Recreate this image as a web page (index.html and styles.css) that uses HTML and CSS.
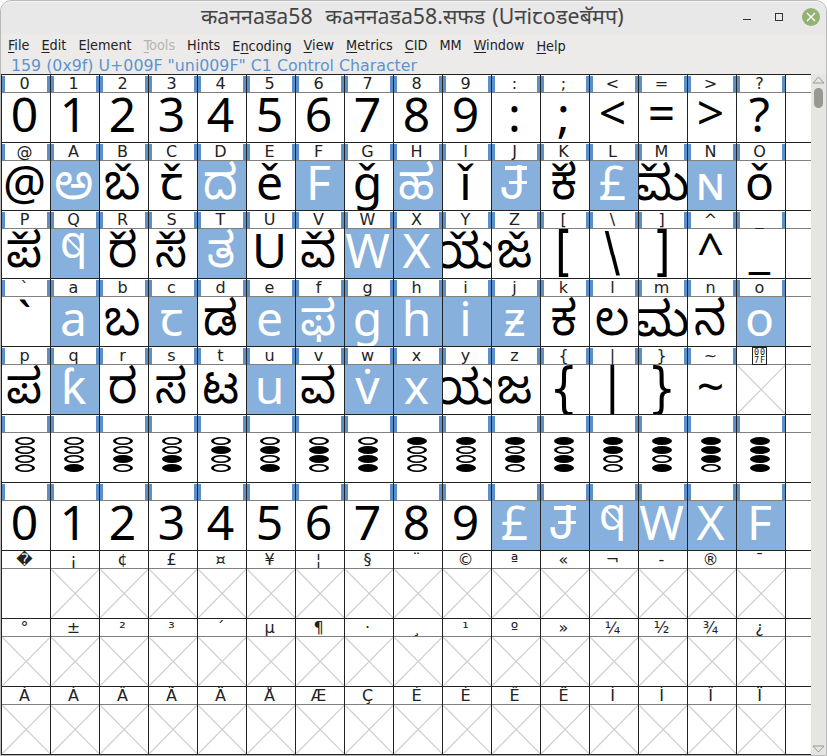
FILE: index.html
```
<!DOCTYPE html>
<html lang="en">
<head>
<meta charset="utf-8">
<title>Font view</title>
<link rel="stylesheet" href="styles.css">
</head>
<body>
<div class="window">
  <header class="titlebar">
    <h1 class="title"><span>कaननaडa58</span><span>कaननaडa58.सफड</span><span>(Uनiꞇoडeबॅमप)</span></h1>
    <svg class="controls" width="84" height="22" viewBox="0 0 84 22">
      <path d="M3 13.500h8" stroke="#333" fill="none"/>
      <rect x="35.500" y="7.500" width="7" height="7" stroke="#333" fill="none"/>
      <circle cx="71" cy="11" r="9" fill="#92b372"/>
      <path d="M67 7l8 8M75 7l-8 8" stroke="#fff" stroke-width="1.300" fill="none"/>
    </svg>
  </header>
  <nav class="menu">
    <span><u>F</u>ile</span><span><u>E</u>dit</span><span>E<u>l</u>ement</span><span class="off"><u>T</u>ools</span><span>H<u>i</u>nts</span><span class="low">E<u>n</u>coding</span><span><u>V</u>iew</span><span><u>M</u>etrics</span><span><u>C</u>ID</span><span>MM</span><span><u>W</u>indow</span><span class="low"><u>H</u>elp</span>
  </nav>
  <p class="info">159 (0x9f) U+009F "uni009F" C1 Control Character</p>
  <div class="body">
    <main class="grid" id="grid"></main>
    <div class="scroll">
      <svg width="13" height="8" viewBox="0 0 13 8"><path d="M1 7L6.500 1L12 7Z" fill="none" stroke="#999"/></svg>
      <div class="thumb"></div>
      <svg class="down" width="13" height="8" viewBox="0 0 13 8"><path d="M1 1L6.500 7L12 1Z" fill="none" stroke="#999"/></svg>
    </div>
  </div>
</div>
<script src="grid.js"></script>
</body>
</html>
```
FILE: styles.css
```
* { box-sizing: border-box; }
body { margin: 0; background: #fff; }
.window {
  width: 827px; height: 756px; overflow: hidden;
  background: #edebea; border: 1px solid #b9b9b9; border-radius: 11px 11px 0 0;
  display: flex; flex-direction: column;
  font-family: "DejaVu Sans", sans-serif; color: #222;
}
.titlebar {
  height: 33px; flex: none; background: #e8e8e8; display: flex; align-items: flex-start;
  padding: 4px 2px 0 200px; border-top: 1px solid #f4f4f4; border-radius: 10px 10px 0 0;
}
.title {
  margin: 0; flex: 1; display: flex; gap: 13px; white-space: pre; color: #444;
  font: 400 21.300px/20px "Noto Sans", sans-serif;
}
.title span:last-child { margin-left: -6px; letter-spacing: 0.200px; }
.menu {
  height: 22px; flex: none; display: flex; gap: 12px; padding: 0 0 0 7px;
  font: 14.300px/22px "DejaVu Sans Condensed", "DejaVu Sans", sans-serif; white-space: nowrap;
}
.menu u { text-underline-offset: 2px; text-decoration-thickness: 1px; }
.menu .low { padding-top: 1px; }
.off { color: #b5b3b2; }
.info { margin: 0; height: 18px; flex: none; padding-left: 10px; font-size: 15.800px; line-height: 19px; color: #5b94cf; white-space: pre; }
.body { flex: none; display: flex; height: 681px; }
.grid {
  width: 810px; display: grid; grid-template-columns: repeat(16, 49px) 26px;
  grid-auto-rows: 68px; background: #fff; border-bottom: 1px solid #222; height: 681px;
}
.cell { border-left: 1px solid #222; border-top: 1px solid #222; overflow: hidden; }
.label {
  height: 18px; border-bottom: 1px solid #808080; clip-path: inset(0); display: flex;
  justify-content: center; font-size: 16px; line-height: 17px; white-space: pre; padding-right: 3px;
}
.marks .label {
  background: linear-gradient(#5c8fc9, #5c8fc9) 0 1px / 3px 16px no-repeat,
              linear-gradient(#5c8fc9, #5c8fc9) 100% 1px / 3px 16px no-repeat;
}
.glyph {
  height: 49px; overflow: hidden; display: flex; justify-content: center; padding-right: 3px;
  font: 48px/41px "Noto Sans", "Noto Sans Kannada", sans-serif; color: #000; white-space: pre; position: relative;
}
.glyph > span { flex: none; }
.glyph > .kn { transform: translateY(-1px) scaleX(0.940); }
.glyph > .tall { font: 50px/41px "DejaVu Sans", sans-serif; transform: translateY(3px) scale(0.900, 1.120); }
.glyph > .math { margin-top: -2px; }
.glyph > .caron { position: absolute; top: 0; transform: translateX(-50%); }
.glyph > .jay { font: 46px/43px Inter, sans-serif; position: relative; left: -2px; }
.jay::before, .jay::after { content: ""; position: absolute; right: -1px; height: 4px; background: #fff; }
.jay::before { top: 5px; width: 22px; }
.jay::after { top: 20px; width: 18px; height: 3px; }
.glyph > .queue { font-size: 45px; line-height: 24px; position: relative; }
.queue::after { content: ""; position: absolute; left: 5px; top: 15px; width: 18px; height: 1.500px; background: #fff; transform: rotate(45deg); }
.sel .glyph { background: #88b0dc; color: #fff; }
.glyph svg { flex: none; }
.empty .glyph { padding: 0; }
.hex {
  width: 15px; height: 18px; border: 1px solid #222; font: 8.500px/8px "DejaVu Sans Mono", monospace;
  text-align: center; letter-spacing: 1px; padding-left: 1px; white-space: normal;
}
.scroll { width: 15px; background: #e5e5e1; display: flex; flex-direction: column; align-items: center; padding: 2px 0 2px; }
.thumb { width: 9px; height: 20px; border-radius: 5px; background: #999993; margin-top: 4px; }
.down { margin-top: auto; }
```
FILE: grid.js
```
// Each row: labels, glyphs, and the columns that are highlighted.
// A glyph given as [base, x] carries a caron centred at x.
const digits = [..."0123456789"];
const rows = [
  { labels: [..."0123456789:;<=>?"], glyphs: [..."0123456789:;<=>?"], sel: [] },
  { labels: [..."@ABCDEFGHIJKLMNO"], glyphs: ["@","ಅ",["ಬ",23],["ꞇ",23],"ದ","ě","F","ǧ","ಹ","ǐ","J",["ಕ",19],"£",["ಮ",10],"ɴ","ǒ"], sel: [1,4,6,8,10,12,14] },
  { labels: [..."PQRSTUVWXYZ[\\]^_"], glyphs: [["ಪ",18],"q",["ರ",18],["ಸ",18],"ತ","U",["ವ",18],"W","X",["ಯ",15],["ಜ",25],"[","\\","]","^","_"], sel: [1,4,7,8] },
  { labels: [..."`abcdefghijklmno"], glyphs: ["`","a","ಬ","ꞇ","ಡ","e","ಫ","g","h","i","ƶ","ಕ","ಲ","ಮ","ನ","o"], sel: [1,3,5,6,7,8,9,10,15] },
  { labels: [..."pqrstuvwxyz{|}~", "HEX"], glyphs: ["ಪ","ƙ","ರ","ಸ","ಟ","u","ವ","v̇","x","ಯ","ಜ","{","|","}","~",null], sel: [1,5,7,8] },
  { labels: Array(16).fill(""), dots: true, sel: [] },
  { labels: Array(16).fill(""), glyphs: [...digits,"£","J","q","W","X","F"], sel: [10,11,12,13,14,15] },
  { labels: [..."\uFFFD¡¢£¤¥¦§¨©ª«¬-®¯"], glyphs: ["", ...Array(15).fill(null)], sel: [], plain: true },
  { labels: [..."°±²³´µ¶·¸¹º»¼½¾¿"], glyphs: Array(16).fill(null), sel: [], plain: true },
  { labels: [..."ÀÁÂÃÄÅÆÇÈÉÊËÌÍÎÏ"], glyphs: Array(16).fill(null), sel: [], plain: true },
];

const cross = '<svg width="48" height="49"><path d="M0.500 0.500L48 48.500M48 0.500L0.500 48.500" stroke="#cfcfcf" stroke-width="1.200" fill="none"/></svg>';

// Four stacked ovals showing the bits of n, highest on top.
function ovals(n) {
  let s = '<svg width="24" height="49">';
  for (let i = 0; i < 4; i++) {
    const cy = 8 + i * 9;
    s += `<ellipse cx="12" cy="${cy}" rx="10" ry="4" fill="#000"/>`;
    if (!(n >> (3 - i) & 1)) s += `<ellipse cx="12" cy="${cy}" rx="7" ry="2.500" fill="#fff"/>`;
  }
  return s + "</svg>";
}

function glyphClass(ch) {
  if ("ಮಯ".includes(ch)) return "plain";
  if (ch >= "\u0C80" && ch <= "\u0CFF") return "kn";
  if ("[\\]{|}".includes(ch)) return "tall";
  if ("<=>".includes(ch)) return "math";
  if (ch === "J") return "jay";
  if (ch === "q") return "queue";
  return "plain";
}

const grid = document.getElementById("grid");
function add(cls, label, content) {
  const cell = document.createElement("div");
  cell.className = "cell " + cls;
  const l = document.createElement("div");
  l.className = "label";
  if (label === "HEX") l.innerHTML = '<div class="hex">00 7F</div>';
  else l.textContent = label;
  const g = document.createElement("div");
  g.className = "glyph";
  if (content.svg) g.innerHTML = content.svg;
  else if (content.text) {
    const [ch, x] = Array.isArray(content.text) ? content.text : [content.text];
    const t = document.createElement("span");
    t.className = glyphClass(ch);
    t.textContent = ch;
    g.append(t);
    if (x !== undefined) {
      const k = document.createElement("span");
      k.className = "caron";
      k.style.left = x + "px";
      k.textContent = "ˇ";
      g.append(k);
    }
  }
  cell.append(l, g);
  grid.append(cell);
}
for (const r of rows) {
  for (let c = 0; c < 16; c++) {
    const none = !r.dots && r.glyphs[c] === null;
    const cls = (r.plain || r.labels[c] === "HEX" ? "" : "marks ") + (r.sel.includes(c) ? "sel " : "") + (none ? "empty" : "");
    add(cls, r.labels[c], r.dots ? { svg: ovals(c) } : none ? { svg: cross } : { text: r.glyphs[c] });
  }
  add("tail", "", { text: "" });
}
```
